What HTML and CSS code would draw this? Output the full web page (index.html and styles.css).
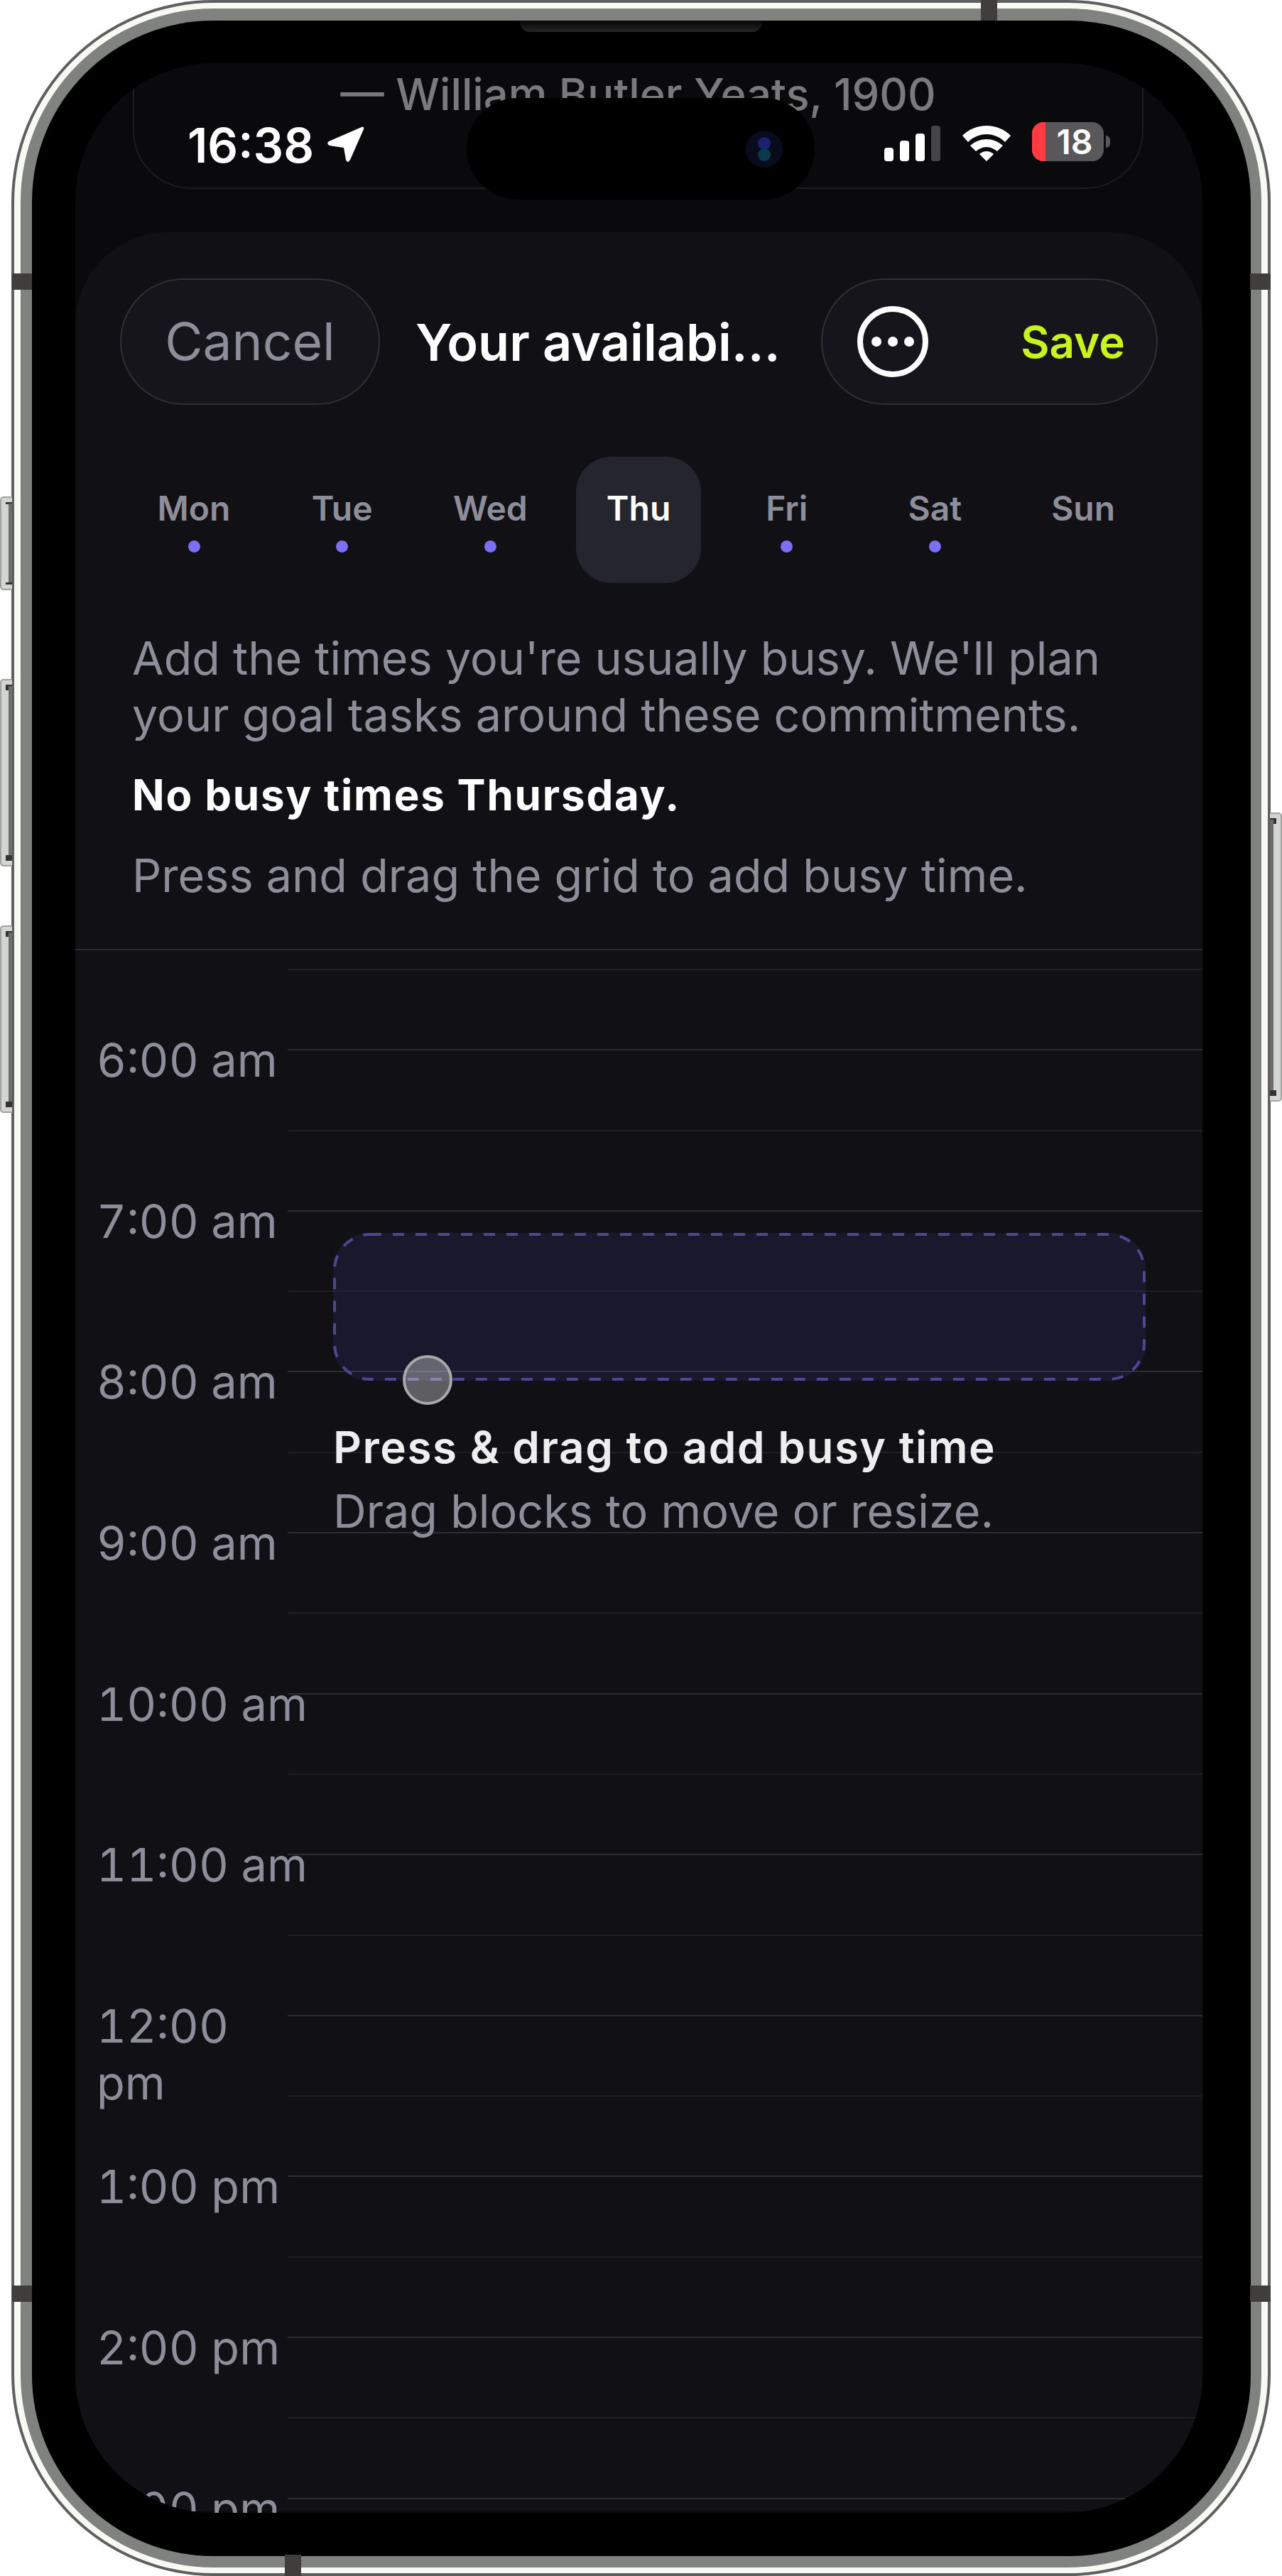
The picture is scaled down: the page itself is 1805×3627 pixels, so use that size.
FILE: index.html
```html
<!doctype html>
<html>
<head>
<meta charset="utf-8">
<title>Your availability</title>
<link rel="stylesheet" href="styles.css">
</head>
<body>
<div class="phone">
	<div class="side-btn btn-a"><i class="notch thin notch-top"></i><i class="strip"></i><i class="notch thin notch-bot"></i></div>
	<div class="side-btn btn-b"><i class="notch notch-top"></i><i class="strip"></i><i class="notch notch-bot"></i></div>
	<div class="side-btn btn-c"><i class="notch notch-top"></i><i class="strip"></i><i class="notch notch-bot"></i></div>
	<div class="side-btn btn-r"><i class="notch notch-top"></i><i class="strip"></i><i class="notch notch-bot"></i></div>

	<div class="frame-dark">
		<div class="frame-white">
			<div class="frame-grey">
				<div class="bezel">
					<div class="speaker"></div>
					<div class="screen">
						<div class="island"><span class="camera"><i class="lens-a"></i><i class="lens-b"></i></span></div>

						<div class="top">
							<div class="status-pill">
								<p class="quote">— William Butler Yeats, 1900</p>
								<div class="status">
									<div class="status-left">
										<span class="clock">16:38</span>
										<svg class="arrow" viewBox="0 0 53 51"><path d="M49 1Q53-1 52 4L33 47Q29 53 27 47L24 30 4 27Q-1 24 3 21Z" fill="#fff"/></svg>
									</div>
									<div class="status-right">
										<div class="signal"><i class="bar bar-1"></i><i class="bar bar-2"></i><i class="bar bar-3"></i><i class="bar bar-4"></i></div>
										<svg class="wifi" viewBox="0 0 68 50"><path d="M34 0C47 0 59 5 68 14L60 23C53 16 44 12 34 12 24 12 15 16 8 23L0 14C9 5 21 0 34 0Z M34 19C42 19 50 22 57 28L49 36C45 33 40 30 34 30 28 30 23 33 19 36L11 28C18 22 26 19 34 19Z M34 36C38 36 42 38 44 40L34 50 24 40C26 38 30 36 34 36Z" fill="#fff"/></svg>
										<div class="battery"><i class="battery-low"></i><span class="battery-num">18</span><i class="battery-cap"></i></div>
									</div>
								</div>
							</div>
						</div>

						<div class="sheet">
							<div class="header">
								<div class="pill cancel">Cancel</div>
								<div class="title">Your availabi...</div>
								<div class="pill actions">
									<svg class="more" viewBox="0 0 100 100"><circle cx="50" cy="50" r="46" fill="none" stroke="#fff" stroke-width="8"/><circle cx="27" cy="50" r="7" fill="#fff"/><circle cx="50" cy="50" r="7" fill="#fff"/><circle cx="73" cy="50" r="7" fill="#fff"/></svg>
									<span class="save">Save</span>
								</div>
							</div>

							<div class="days">
								<div class="day"><span class="day-name">Mon</span><i class="day-dot"></i></div>
								<div class="day"><span class="day-name">Tue</span><i class="day-dot"></i></div>
								<div class="day"><span class="day-name">Wed</span><i class="day-dot"></i></div>
								<div class="day active"><span class="day-name">Thu</span></div>
								<div class="day"><span class="day-name">Fri</span><i class="day-dot"></i></div>
								<div class="day"><span class="day-name">Sat</span><i class="day-dot"></i></div>
								<div class="day"><span class="day-name">Sun</span></div>
							</div>

							<div class="notes">
								<p class="note">Add the times you're usually busy. We'll plan<br>your goal tasks around these commitments.</p>
								<p class="note-strong">No busy times Thursday.</p>
								<p class="note note-last">Press and drag the grid to add busy time.</p>
							</div>

							<div class="grid">
								<div class="slot slot-first"></div>
								<div class="hour"><div class="hour-label">6:00 am</div><div class="hour-slots"><div class="slot strong"></div><div class="slot"></div></div></div>
								<div class="hour"><div class="hour-label">7:00 am</div><div class="hour-slots"><div class="slot strong"></div><div class="slot"></div></div></div>
								<div class="hour"><div class="hour-label">8:00 am</div><div class="hour-slots"><div class="slot strong"></div><div class="slot"></div></div></div>
								<div class="hour"><div class="hour-label">9:00 am</div><div class="hour-slots"><div class="slot strong"></div><div class="slot"></div></div></div>
								<div class="hour"><div class="hour-label">10:00 am</div><div class="hour-slots"><div class="slot strong"></div><div class="slot"></div></div></div>
								<div class="hour"><div class="hour-label">11:00 am</div><div class="hour-slots"><div class="slot strong"></div><div class="slot"></div></div></div>
								<div class="hour"><div class="hour-label">12:00<br>pm</div><div class="hour-slots"><div class="slot strong"></div><div class="slot"></div></div></div>
								<div class="hour"><div class="hour-label">1:00 pm</div><div class="hour-slots"><div class="slot strong"></div><div class="slot"></div></div></div>
								<div class="hour"><div class="hour-label">2:00 pm</div><div class="hour-slots"><div class="slot strong"></div><div class="slot"></div></div></div>
								<div class="hour"><div class="hour-label">3:00 pm</div><div class="hour-slots"><div class="slot strong"></div><div class="slot"></div></div></div>

								<div class="hint">
									<div class="hint-block">
										<svg class="hint-dash" viewBox="0 0 1144 208"><rect x="2" y="2" width="1140" height="204" rx="50" fill="none" stroke="#4d4694" stroke-width="4" stroke-dasharray="16 16"/></svg>
										<span class="hint-touch"></span>
									</div>
									<p class="hint-title">Press &amp; drag to add busy time</p>
									<p class="hint-sub">Drag blocks to move or resize.</p>
								</div>
							</div>
						</div>
					</div>
				</div>
			</div>
		</div>
	</div>

	<i class="band band-l1"></i>
	<i class="band band-l2"></i>
	<i class="band band-r1"></i>
	<i class="band band-r2"></i>
	<i class="band band-top"></i>
	<i class="band band-bot"></i>
</div>
</body>
</html>
```

FILE: styles.css
```css
*{box-sizing:border-box;}
body{margin:0;background:#fff;font-family:"Inter","Liberation Sans",sans-serif;}
p{margin:0;}
i{display:block;}

/* phone shell */
.phone{position:relative;width:1805px;height:3627px;padding:0 16px;}
.frame-dark{height:3627px;padding:4px;background:#5f5f5f;border-radius:285px;}
.frame-white{height:100%;padding:8px 9px;background:#f8f9f3;border-radius:281px;}
.frame-grey{height:100%;padding:17px 15px 16px 16px;background:#808280;border-radius:272px;}
.bezel{position:relative;height:100%;padding:60px 68px 61px 61px;background:#000;border-radius:255px;}
.speaker{position:absolute;left:687px;top:0;width:341px;height:16px;background:linear-gradient(#050505,#262626);border-radius:0 0 14px 14px;}
.side-btn{position:absolute;left:0;width:17px;background:#d3d5d2;border:2px solid #a2a3a1;border-right:0;border-radius:5px 0 0 5px;}
.btn-a{top:699px;height:132px;}
.btn-b{top:956px;height:264px;}
.btn-c{top:1303px;height:264px;}
.btn-r{top:1144px;left:1788px;height:407px;transform:scaleX(-1);}
.strip{position:absolute;right:0;top:8px;bottom:8px;width:5px;background:#6d6d6d;}
.notch{position:absolute;right:0;width:9px;height:8px;background:#333;}
.notch.thin{height:3px;}
.notch-top{top:6px;}
.notch-bot{bottom:6px;}
.band{position:absolute;background:#3f3e3c;}
.band-l1{left:17px;top:385px;width:28px;height:23px;}
.band-l2{left:17px;top:3218px;width:28px;height:23px;}
.band-r1{left:1760px;top:385px;width:29px;height:23px;}
.band-r2{left:1760px;top:3218px;width:29px;height:23px;}
.band-top{left:1381px;top:0;width:23px;height:29px;}
.band-bot{left:401px;top:3597px;width:23px;height:30px;}

/* screen */
.screen{position:relative;height:100%;overflow:hidden;background:#0a0a0d;border-radius:195px;}
.island{position:absolute;z-index:2;left:551px;top:49px;width:490px;height:143px;background:#000;border-radius:72px;}
.camera{position:absolute;left:393px;top:46px;width:52px;height:52px;background:#070b1c;border-radius:50%;}
.lens-a,.lens-b{position:absolute;left:17px;width:18px;height:18px;border-radius:50%;}
.lens-a{top:9px;background:#1b2170;}
.lens-b{top:25px;background:#0b3a4a;}

.top{height:238px;padding:0 83px 0 81px;}
.status-pill{height:177px;padding:11px 54px 0 75px;border:2px solid #1c1c21;border-top:0;border-radius:0 0 82px 82px;}
.quote{margin-left:-75px;margin-right:-54px;font-size:61.5px;line-height:66px;font-weight:500;color:#7a7a7a;text-align:center;white-space:nowrap;}
.status{display:flex;justify-content:space-between;align-items:flex-start;margin-top:6px;}
.status-left{display:flex;align-items:flex-start;gap:18px;}
.clock{font-size:67px;line-height:66px;font-weight:600;color:#fff;}
.arrow{width:53px;height:51px;margin-top:6px;}
.status-right{display:flex;align-items:flex-start;}
.signal{display:flex;align-items:flex-end;gap:9px;height:50px;margin-top:5px;}
.bar{width:13px;background:#fff;border-radius:4px;}
.bar-1{height:19px;}
.bar-2{height:29px;}
.bar-3{height:39px;}
.bar-4{height:50px;background:#444;}
.wifi{width:68px;height:50px;margin:5px 30px 0 31px;}
.battery{position:relative;display:flex;justify-content:center;align-items:center;width:101px;height:55px;padding-left:19px;background:#58585a;border-radius:16px;}
.battery-low{position:absolute;left:0;top:0;width:19px;height:55px;background:#ff3b41;border-radius:16px 0 0 16px;}
.battery-num{font-size:48px;line-height:55px;font-weight:600;color:#fff;}
.battery-cap{position:absolute;left:104px;top:19px;width:6px;height:17px;background:#58585a;border-radius:0 8px 8px 0;}

/* sheet */
.sheet{height:3209px;background:#101015;border-radius:130px 130px 0 0;}
.header{display:flex;align-items:center;padding:65px 63px 0;}
.pill{height:178px;background:#15151b;border:2px solid #2f2f36;border-radius:89px;}
.cancel{width:366px;font-size:73px;line-height:174px;color:#8e8e9a;text-align:center;}
.title{flex:1;padding-left:50px;font-size:72px;font-weight:600;color:#fff;white-space:nowrap;}
.actions{display:flex;justify-content:space-between;align-items:center;width:474px;padding:0 44px 0 49px;}
.more{width:100px;height:100px;}
.save{font-size:62px;font-weight:600;color:#c8f31d;}

.days{display:grid;grid-template-columns:repeat(7,208.7px);margin:73px 0 0 63px;}
.day{display:flex;flex-direction:column;align-items:center;height:178px;width:176px;margin:0 16px;padding-top:44px;border-radius:50px;}
.day.active{background:#25252e;}
.day-name{font-size:48px;line-height:58px;font-weight:600;color:#8e8e9a;}
.day.active .day-name{color:#fff;}
.day-dot{width:17px;height:17px;margin-top:16px;background:#7b6ff5;border-radius:50%;}

.notes{height:517px;padding:66px 80px 0;border-bottom:2px solid #2a2a31;}
.note{font-size:64.7px;line-height:80px;color:#8e8e9a;white-space:nowrap;}
.note-strong{margin-top:32px;font-size:60px;line-height:80px;font-weight:700;letter-spacing:1.8px;color:#fff;white-space:nowrap;}
.note-last{margin-top:34px;}

/* time grid */
.grid{position:relative;padding-top:26px;}
.hour{display:flex;align-items:flex-start;height:226.6px;}
.hour-label{width:299px;flex:none;margin-top:-24px;padding-left:30px;font-size:65px;line-height:80px;font-variant-numeric:tabular-nums;color:#8e8e9a;white-space:nowrap;}
.hour-slots{flex:1;}
.slot{height:113.3px;border-top:2px solid #1e1e24;}
.slot.strong{border-top-color:#2c2c34;}
.slot-first{margin-left:299px;}

.hint{position:absolute;left:363px;top:398px;width:1144px;}
.hint-block{position:relative;height:208px;background:rgba(110,100,255,.1);border-radius:50px;}
.hint-dash{display:block;width:1144px;height:208px;}
.hint-touch{position:absolute;left:98px;top:172px;width:70px;height:70px;background:rgba(255,255,255,.33);border:4px solid #a8a8a8;border-radius:50%;}
.hint-title{margin-top:54px;font-size:62px;line-height:80px;font-weight:600;letter-spacing:1.5px;color:#eee;white-space:nowrap;}
.hint-sub{margin-top:10px;font-size:64.7px;line-height:80px;color:#8e8e9a;white-space:nowrap;}
```
